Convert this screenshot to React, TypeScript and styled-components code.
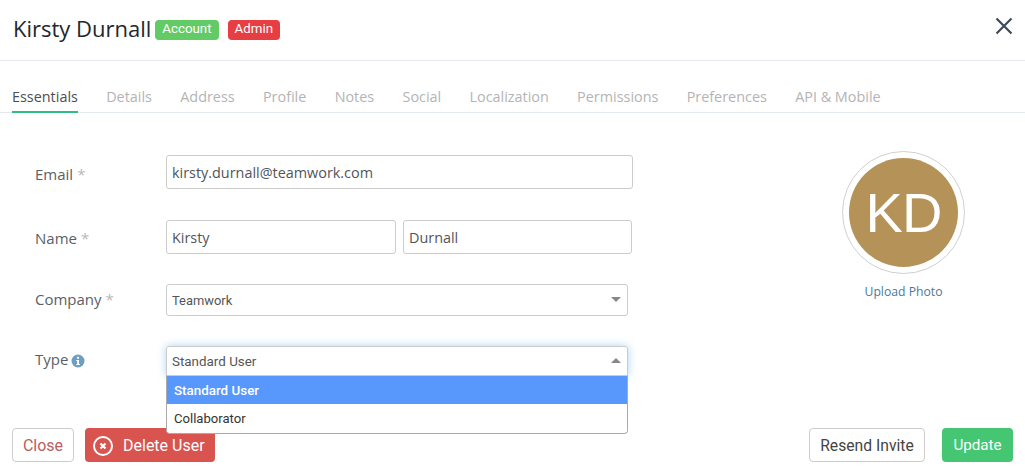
import styled, { createGlobalStyle } from 'styled-components';

const tabs = ['Essentials', 'Details', 'Address', 'Profile', 'Notes', 'Social', 'Localization', 'Permissions', 'Preferences', 'API & Mobile'];

export default function App() {
  return (
    <>
      <GlobalStyle />
      <Modal>
        <Header>
          <Title>Kirsty Durnall</Title>
          <Badge $bg="#62cb65" $gap={4}>Account</Badge>
          <Badge $bg="#e63e43" $gap={9}>Admin</Badge>
          <CloseIcon viewBox="0 0 18 18" aria-hidden="true">
            <path d="M1.5 1.5 L16.5 16.5 M16.5 1.5 L1.5 16.5" stroke="#3d4a5c" strokeWidth="2.2" fill="none" />
          </CloseIcon>
        </Header>

        <TabBar>
          {tabs.map((t, i) => (
            <Tab key={t} $active={i === 0}>{t}</Tab>
          ))}
        </TabBar>

        <Body>
          <Form>
            <Row $top={0}>
              <Label $down={2}>Email <Star>*</Star></Label>
              <TextInput $width={467} defaultValue="kirsty.durnall@teamwork.com" />
            </Row>
            <Row $top={31}>
              <Label $down={1}>Name <Star>*</Star></Label>
              <NameGroup>
                <TextInput $width={230} defaultValue="Kirsty" />
                <TextInput $width={229} defaultValue="Durnall" />
              </NameGroup>
            </Row>
            <Row $top={30}>
              <Label $down={-1}>Company <Star>*</Star></Label>
              <SelectBox>
                Teamwork
                <Caret />
              </SelectBox>
            </Row>
            <Row $top={30}>
              <Label $down={-2}>
                Type
                <InfoIcon viewBox="0 0 14 14" aria-hidden="true">
                  <circle cx="7" cy="7" r="6.5" fill="#6f9fc0" />
                  <rect x="6" y="2.8" width="2" height="2" rx="0.5" fill="#fff" />
                  <path d="M5.3 6h2.7v3.9h0.9v1.1H5.3V9.9h0.9V7.1H5.3z" fill="#fff" />
                </InfoIcon>
              </Label>
              <TypeSelect>
                <SelectBox $open>
                  Standard User
                  <Caret $up />
                </SelectBox>
                <Dropdown>
                  <Option $selected>Standard User</Option>
                  <Option>Collaborator</Option>
                </Dropdown>
              </TypeSelect>
            </Row>
          </Form>

          <PhotoColumn>
            <AvatarRing>
              <Avatar>KD</Avatar>
            </AvatarRing>
            <UploadLink>Upload Photo</UploadLink>
          </PhotoColumn>
        </Body>

        <Footer>
          <CloseButton>Close</CloseButton>
          <DeleteButton>
            <svg width="20" height="20" viewBox="0 0 20 20" aria-hidden="true">
              <circle cx="10" cy="10" r="9" fill="none" stroke="#fff" strokeWidth="2" />
              <path d="M7.5 7.5 L12.5 12.5 M12.5 7.5 L7.5 12.5" stroke="#fff" strokeWidth="2.2" />
            </svg>
            Delete User
          </DeleteButton>
          <Spacer />
          <ResendButton>Resend Invite</ResendButton>
          <UpdateButton>Update</UpdateButton>
        </Footer>
      </Modal>
    </>
  );
}

const GlobalStyle = createGlobalStyle`
  html, body {
    margin: 0;
    padding: 0;
    background: #fff;
  }
  * {
    box-sizing: border-box;
  }
`;

const Modal = styled.div`
  width: 1025px;
  height: 470px;
  overflow: hidden;
  position: relative;
  font-family: "Open Sans", sans-serif;
  background: #fff;
`;

const Header = styled.div`
  display: flex;
  align-items: center;
  height: 61px;
  padding: 0 12px 5px 13px;
  border-bottom: 1px solid #e6eaf0;
`;

const Title = styled.h1`
  margin: 0;
  font-size: 22px;
  font-weight: 400;
  color: #23282d;
`;

const Badge = styled.span<{ $bg: string; $gap: number }>`
  margin-left: ${(p) => p.$gap}px;
  margin-top: 5px;
  padding: 0 7px;
  height: 20px;
  line-height: 18px;
  border-radius: 4px;
  background: ${(p) => p.$bg};
  color: #fff;
  font-family: Roboto, sans-serif;
  font-size: 13.3px;
  font-weight: 400;
`;

const CloseIcon = styled.svg`
  margin-left: auto;
  margin-bottom: 4px;
  width: 18px;
  height: 18px;
`;

const TabBar = styled.div`
  display: flex;
  gap: 28.3px;
  height: 52px;
  padding: 0 12px;
  border-bottom: 1px solid #e2e7f0;
`;

const Tab = styled.div<{ $active?: boolean }>`
  display: flex;
  align-items: flex-end;
  height: 52px;
  padding-bottom: 5px;
  font-size: 14.4px;
  color: ${(p) => (p.$active ? '#4a4f55' : '#b4b4b4')};
  border-bottom: 2px solid ${(p) => (p.$active ? '#2fbd85' : 'transparent')};
`;

const Body = styled.div`
  display: flex;
  height: 315px;
`;

const Form = styled.div`
  width: 800px;
  padding: 42px 0 0 35px;
`;

const Row = styled.div<{ $top: number }>`
  display: flex;
  align-items: center;
  margin-top: ${(p) => p.$top}px;
`;

const Label = styled.label<{ $down: number }>`
  display: flex;
  align-items: center;
  gap: 4px;
  width: 131px;
  flex-shrink: 0;
  font-size: 15px;
  color: #5a5f66;
  padding-top: ${(p) => Math.max(p.$down, 0) * 2}px;
  padding-bottom: ${(p) => Math.max(-p.$down, 0) * 2}px;
`;

const Star = styled.span`
  color: #b9b9b9;
`;

const InfoIcon = styled.svg`
  width: 14px;
  height: 14px;
  margin-left: -1px;
  margin-top: 3px;
`;

const NameGroup = styled.div`
  display: flex;
  gap: 7px;
`;

const TextInput = styled.input<{ $width: number }>`
  width: ${(p) => p.$width}px;
  height: 34px;
  padding: 0 5px;
  border: 1px solid #ccc;
  border-radius: 3px;
  outline: none;
  font-family: "Open Sans", sans-serif;
  font-size: 14.4px;
  color: #50555b;
`;

const TypeSelect = styled.div`
  position: relative;
`;

const SelectBox = styled.div<{ $open?: boolean }>`
  position: relative;
  width: 462px;
  height: ${(p) => (p.$open ? 30 : 32)}px;
  display: flex;
  align-items: center;
  padding-left: 5px;
  border: 1px solid #ccc;
  border-radius: ${(p) => (p.$open ? '3px 3px 0 0' : '3px')};
  font-family: Roboto, sans-serif;
  font-size: ${(p) => (p.$open ? 13.4 : 12.9)}px;
  color: #555;
  box-shadow: ${(p) => (p.$open ? '0 0 8px rgba(102, 175, 233, 0.55)' : 'none')};
`;

const Caret = styled.span<{ $up?: boolean }>`
  position: absolute;
  right: 6px;
  top: 50%;
  margin-top: -3px;
  width: 0;
  height: 0;
  border-left: 5px solid transparent;
  border-right: 5px solid transparent;
  ${(p) => (p.$up ? 'border-bottom: 5px solid #888;' : 'border-top: 5px solid #888;')}
`;

const Dropdown = styled.div`
  position: absolute;
  top: 29px;
  left: 0;
  z-index: 2;
  width: 462px;
  height: 59px;
  background: #fff;
  border: 1px solid #aaa;
  border-top-color: #ccc;
  border-radius: 0 0 4px 4px;
  overflow: hidden;
`;

const Option = styled.div<{ $selected?: boolean }>`
  height: 28px;
  line-height: 30px;
  padding-left: 7px;
  font-family: Roboto, sans-serif;
  font-size: ${(p) => (p.$selected ? 13.4 : 13.1)}px;
  font-weight: ${(p) => (p.$selected ? 500 : 400)};
  background: ${(p) => (p.$selected ? '#5897fb' : '#fff')};
  color: ${(p) => (p.$selected ? '#fff' : '#333')};
`;

const PhotoColumn = styled.div`
  display: flex;
  flex-direction: column;
  align-items: center;
  width: 123px;
  margin-left: 42px;
  padding-top: 38px;
`;

const AvatarRing = styled.div`
  width: 123px;
  height: 123px;
  flex-shrink: 0;
  padding: 6px;
  border: 1px solid #d0d0d0;
  border-radius: 50%;
`;

const Avatar = styled.div`
  display: flex;
  align-items: center;
  justify-content: center;
  width: 100%;
  height: 100%;
  border-radius: 50%;
  background: #b59257;
  color: #fff;
  font-family: "Liberation Sans", sans-serif;
  font-size: 56px;
  letter-spacing: -1px;
`;

const UploadLink = styled.a`
  margin-top: 9px;
  font-size: 12.2px;
  color: #4b7a9b;
`;

const Footer = styled.div`
  display: flex;
  align-items: center;
  height: 34px;
  padding: 0 12px;
`;

const Spacer = styled.div`
  flex: 1;
`;

const BaseButton = styled.button`
  height: 34px;
  border-radius: 4px;
  font-family: Roboto, sans-serif;
  font-size: 16px;
  padding: 1px 0 0;
`;

const CloseButton = styled(BaseButton)`
  width: 62px;
  background: #fff;
  border: 1px solid #ccc;
  color: #b9605f;
`;

const DeleteButton = styled(BaseButton)`
  display: flex;
  align-items: center;
  gap: 10px;
  width: 130px;
  margin-left: 11px;
  padding-left: 8px;
  border: none;
  background: #d9534f;
  color: #fff;
`;

const ResendButton = styled(BaseButton)`
  width: 116px;
  background: #fff;
  border: 1px solid #ccc;
  color: #444;
  font-size: 15.7px;
`;

const UpdateButton = styled(BaseButton)`
  width: 71px;
  margin-left: 17px;
  padding-top: 0;
  border: none;
  background: #44c673;
  color: #fff;
  font-size: 15.2px;
`;
